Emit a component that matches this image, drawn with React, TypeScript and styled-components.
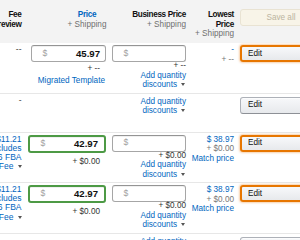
import React from 'react';
import styled, { createGlobalStyle } from 'styled-components';

const GlobalStyle = createGlobalStyle`
  body {
    margin: 0;
    overflow: hidden;
    background: #fff;
  }
`;

const Table = styled.div`
  width: 320px;
  font-family: 'Liberation Sans', Arial, sans-serif;
  font-size: 8.2px;
  line-height: 9.5px;
  color: #111;
`;

const columns = '25px 84px 80px 47px 84px';

const HeaderRow = styled.div`
  display: grid;
  grid-template-columns: ${columns};
  height: 43px;
  background: #f3f3f3;
`;

type HeadCellProps = {
  $align: 'end' | 'center';
  $padLeft?: number;
  $padRight?: number;
};

const HeadCell = styled.div<HeadCellProps>`
  display: flex;
  flex-direction: column;
  align-items: ${(p) => (p.$align === 'end' ? 'flex-end' : 'center')};
  padding: 10px ${(p) => p.$padRight || 0}px 0 ${(p) => p.$padLeft || 0}px;
  white-space: nowrap;
`;

const HeadTitle = styled.span<{ $link?: boolean }>`
  font-weight: 700;
  letter-spacing: -0.35px;
  color: ${(p) => (p.$link ? '#0066c0' : '#111')};
`;

const HeadSub = styled.span`
  color: #6f6f6f;
`;

const SaveAllButton = styled.button`
  margin: 9px 0 0 4px;
  width: 80px;
  height: 17px;
  padding: 0 0 0 2px;
  border: 1px solid #e9e3d3;
  border-radius: 3px;
  background: #f8f4e8;
  color: #bcb4a1;
  font: inherit;
  text-align: center;
`;

const Row = styled.div<{ $minHeight?: number }>`
  display: grid;
  grid-template-columns: ${columns};
  padding: 2px 0 3px;
  border-bottom: 1px solid #e7e7e7;
  min-height: ${(p) => (p.$minHeight ? `${p.$minHeight}px` : 'auto')};
`;

// fee column is cut by the left edge of the view, so lines overflow leftwards
const FeeCell = styled.div`
  display: flex;
  flex-direction: column;
  align-items: flex-end;
  padding-right: 3.5px;
  font-size: 8.5px;
  line-height: 9.2px;
  white-space: nowrap;
`;

const Cell = styled.div<{ $padRight?: number; $padLeft?: number }>`
  display: flex;
  flex-direction: column;
  align-items: flex-end;
  padding-right: ${(p) => p.$padRight || 0}px;
  padding-left: ${(p) => p.$padLeft || 0}px;
  white-space: nowrap;
`;

const ActionCell = styled.div`
  padding-left: 4px;
`;

const PriceInput = styled.div<{ $highlight?: boolean; $width: number }>`
  box-sizing: border-box;
  display: flex;
  align-items: center;
  justify-content: space-between;
  width: ${(p) => p.$width}px;
  height: ${(p) => (p.$highlight ? 18 : 17)}px;
  padding: 0 ${(p) => (p.$highlight ? 6 : 5)}px 0 10.5px;
  background: #fff;
  border: ${(p) => (p.$highlight ? '2px solid #4d9a45' : '1px solid #a6a6a6')};
  border-top-color: ${(p) => (p.$highlight ? '#4d9a45' : '#949494')};
  border-radius: 3px;
  box-shadow: inset 0 1px 0 rgba(0, 0, 0, 0.06);
`;

const Dollar = styled.span`
  color: #a0a0a0;
  font-size: 8.6px;
`;

const InputValue = styled.span`
  font-size: 9.6px;
  font-weight: 700;
  color: #111;
`;

const SubLine = styled.span<{ $gap?: number; $inset?: number; $muted?: boolean }>`
  margin-top: ${(p) => p.$gap || 0}px;
  margin-right: ${(p) => p.$inset || 0}px;
  color: ${(p) => (p.$muted ? '#767676' : '#333')};
`;

const LinkText = styled.span<{ $gap?: number; $inset?: number }>`
  margin-top: ${(p) => p.$gap || 0}px;
  margin-right: ${(p) => p.$inset || 0}px;
  color: #0066c0;
`;

const Caret = styled.span`
  display: inline-block;
  width: 0;
  height: 0;
  margin-left: 4px;
  vertical-align: 1px;
  border-left: 2.5px solid transparent;
  border-right: 2.5px solid transparent;
  border-top: 3px solid #555;
`;

const Dash = styled.span`
  color: #444;
`;

const EditButton = styled.button<{ $focused?: boolean }>`
  box-sizing: border-box;
  display: block;
  width: 80px;
  height: 17px;
  margin-top: ${(p) => (p.$focused ? 0 : 1)}px;
  padding: 0 0 0 ${(p) => (p.$focused ? 6 : 7)}px;
  text-align: left;
  font: inherit;
  color: #111;
  border-radius: 3px;
  border: ${(p) => (p.$focused ? '2px solid #e77600' : '1px solid #adb1b8')};
  border-bottom-color: ${(p) => (p.$focused ? '#e77600' : '#8d9096')};
  background: linear-gradient(to bottom, #f7f8fa, #e7e9ec);
  box-shadow: ${(p) =>
    p.$focused ? '0 0 2px 1px rgba(228, 121, 17, 0.35)' : 'inset 0 1px 0 rgba(255, 255, 255, 0.6)'};
`;

const QuantityLinks = ({ gap }: { gap?: number }) => (
  <>
    <LinkText $gap={gap}>Add quantity</LinkText>
    <LinkText $inset={1}>
      discounts
      <Caret />
    </LinkText>
  </>
);

const FeeBreakdown = () => (
  <FeeCell>
    <LinkText>$11.21</LinkText>
    <LinkText>Includes</LinkText>
    <LinkText>$6 FBA</LinkText>
    <LinkText>
      Fee
      <Caret />
    </LinkText>
  </FeeCell>
);

type OfferRowProps = {
  price: string;
  lowest: string;
};

const OfferRow = ({ price, lowest }: OfferRowProps) => (
  <Row>
    <FeeBreakdown />
    <Cell $padRight={3}>
      <PriceInput $highlight $width={78}>
        <Dollar>$</Dollar>
        <InputValue>{price}</InputValue>
      </PriceInput>
      <SubLine $gap={4} $inset={6}>
        + $0.00
      </SubLine>
    </Cell>
    <Cell $padRight={3}>
      <PriceInput $width={74}>
        <Dollar>$</Dollar>
      </PriceInput>
      <SubLine $gap={-1}>+ $0.00</SubLine>
      <QuantityLinks />
    </Cell>
    <Cell $padRight={2}>
      <LinkText>{lowest}</LinkText>
      <SubLine $muted>+ $0.00</SubLine>
      <LinkText>Match price</LinkText>
    </Cell>
    <ActionCell>
      <EditButton $focused>Edit</EditButton>
    </ActionCell>
  </Row>
);

const ParentRow = () => (
  <Row $minHeight={33}>
    <FeeCell>
      <Dash>-</Dash>
    </FeeCell>
    <Cell />
    <Cell $padRight={3}>
      <QuantityLinks gap={1} />
    </Cell>
    <Cell />
    <ActionCell>
      <EditButton>Edit</EditButton>
    </ActionCell>
  </Row>
);

const App = () => (
  <>
    <GlobalStyle />
    <Table>
      <HeaderRow>
        <HeadCell $align="end" $padRight={3.5}>
          <HeadTitle>Fee</HeadTitle>
          <HeadTitle>review</HeadTitle>
        </HeadCell>
        <HeadCell $align="center" $padLeft={40}>
          <HeadTitle $link>Price</HeadTitle>
          <HeadSub>+ Shipping</HeadSub>
        </HeadCell>
        <HeadCell $align="end" $padRight={3}>
          <HeadTitle>Business Price</HeadTitle>
          <HeadSub>+ Shipping</HeadSub>
        </HeadCell>
        <HeadCell $align="end" $padRight={2}>
          <HeadTitle>Lowest</HeadTitle>
          <HeadTitle>Price</HeadTitle>
          <HeadSub>+ Shipping</HeadSub>
        </HeadCell>
        <div>
          <SaveAllButton>Save all</SaveAllButton>
        </div>
      </HeaderRow>

      <Row>
        <FeeCell>
          <Dash>--</Dash>
        </FeeCell>
        <Cell $padRight={3}>
          <PriceInput $width={75}>
            <Dollar>$</Dollar>
            <InputValue>45.97</InputValue>
          </PriceInput>
          <SubLine $gap={2} $inset={6}>
            + --
          </SubLine>
          <LinkText $gap={2} $inset={1}>
            Migrated Template
          </LinkText>
        </Cell>
        <Cell $padRight={3}>
          <PriceInput $width={74}>
            <Dollar>$</Dollar>
          </PriceInput>
          <SubLine $gap={-1}>+ --</SubLine>
          <QuantityLinks />
        </Cell>
        <Cell $padRight={2}>
          <LinkText>-</LinkText>
          <SubLine $muted>+ --</SubLine>
        </Cell>
        <ActionCell>
          <EditButton $focused>Edit</EditButton>
        </ActionCell>
      </Row>

      <ParentRow />
      <OfferRow price="42.97" lowest="$ 38.97" />
      <OfferRow price="42.97" lowest="$ 38.97" />
      <ParentRow />
    </Table>
  </>
);

export default App;
